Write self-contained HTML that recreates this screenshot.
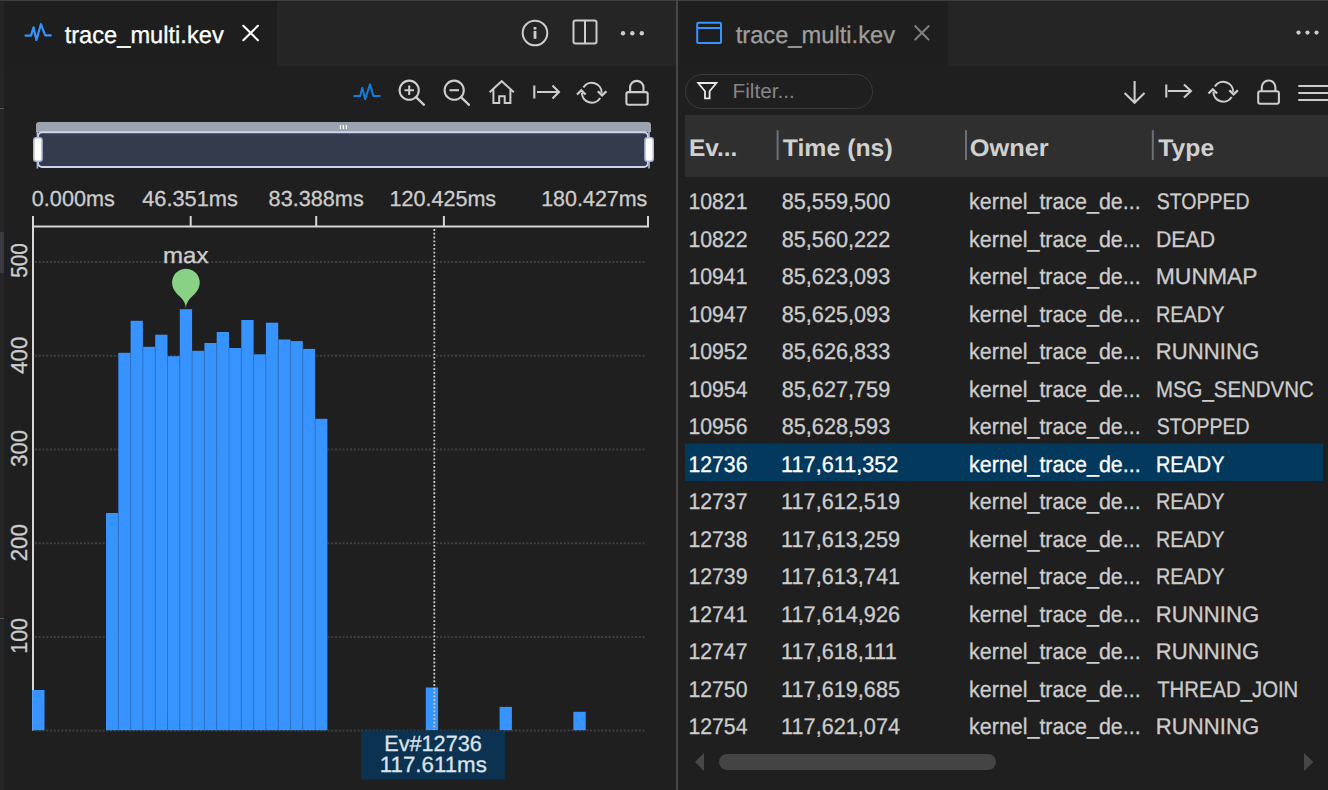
<!DOCTYPE html>
<html><head><meta charset="utf-8"><title>trace_multi.kev</title>
<style>
html,body{margin:0;padding:0;width:1328px;height:790px;overflow:hidden;background:#1f1f1f;}
svg{position:absolute;left:0;top:0;display:block;font-family:"Liberation Sans", sans-serif;text-rendering:geometricPrecision;}
</style></head><body>
<svg width="1328" height="790" viewBox="0 0 1328 790">
<rect x="0" y="0" width="1328" height="1" fill="#3f3f3f"/>
<rect x="0" y="1" width="4" height="789" fill="#252525"/>
<rect x="0" y="108" width="4" height="1" fill="#575757"/>
<rect x="0" y="232" width="4" height="41" fill="#393941"/>
<rect x="0" y="618" width="4" height="1" fill="#575757"/>
<rect x="4" y="1" width="672" height="65" fill="#252525"/>
<rect x="4" y="1" width="273" height="65" fill="#1e1e1e"/>
<rect x="676" y="0" width="2" height="790" fill="#474747"/>
<rect x="678" y="1" width="650" height="65" fill="#252525"/>
<rect x="678" y="1" width="270" height="65" fill="#1e1e1e"/>
<path d="M25.5 35.6 H31 L33.6 27.4 L36.4 40 L40.9 24.2 L45.2 35.4 H50.8" fill="none" stroke="#3794ff" stroke-width="2.2" stroke-linejoin="round" stroke-linecap="round"/>
<text transform="translate(64.65,42.60) scale(0.9856,1)" font-size="24" stroke="#ffffff" stroke-width="0.3" fill="#ffffff">trace_multi.kev</text>
<path d="M243.3 25.8 L257.9 40.2 M257.9 25.8 L243.3 40.2" stroke="#ffffff" stroke-width="2.1" stroke-linecap="round"/>
<circle cx="535" cy="33" r="12.3" fill="none" stroke="#cccccc" stroke-width="2"/>
<rect x="533.6" y="27" width="2.8" height="2.6" fill="#cccccc"/><rect x="533.6" y="31" width="2.8" height="7.8" fill="#cccccc"/>
<rect x="573.5" y="20.5" width="23" height="23" rx="2" fill="none" stroke="#cccccc" stroke-width="2"/><rect x="584" y="21" width="2" height="22" fill="#cccccc"/>
<circle cx="623" cy="33.2" r="2.2" fill="#cccccc"/>
<circle cx="632.3" cy="33.2" r="2.2" fill="#cccccc"/>
<circle cx="641.8" cy="33.2" r="2.2" fill="#cccccc"/>
<rect x="697.2" y="22.7" width="23.8" height="20.2" rx="1" fill="none" stroke="#3794ff" stroke-width="2"/><rect x="697" y="27" width="24" height="2" fill="#3794ff"/>
<text transform="translate(735.64,42.60) scale(0.9881,1)" font-size="24" stroke="#9d9d9d" stroke-width="0.3" fill="#9d9d9d">trace_multi.kev</text>
<path d="M915.3 26.2 L928.5 39.5 M928.5 26.2 L915.3 39.5" stroke="#7d7d7d" stroke-width="2.1" stroke-linecap="round"/>
<circle cx="1298.5" cy="32.6" r="2.1" fill="#cccccc"/>
<circle cx="1307.5" cy="32.6" r="2.1" fill="#cccccc"/>
<circle cx="1316.5" cy="32.6" r="2.1" fill="#cccccc"/>
<path d="M354 95.9 H360.2 L362.3 87.8 L365.2 99.2 L370 84.4 L373.4 95.9 H379.8" fill="none" stroke="#0f7dd9" stroke-width="2" stroke-linejoin="round" stroke-linecap="round"/>
<circle cx="409.2" cy="90.2" r="9.6" fill="none" stroke="#cccccc" stroke-width="2.1"/>
<path d="M416 97.2 L424 104.8" stroke="#cccccc" stroke-width="2.3" stroke-linecap="round"/>
<path d="M404.5 90.2 H414 M409.2 85.5 V95" stroke="#cccccc" stroke-width="2.1"/>
<circle cx="454.2" cy="90.2" r="9.6" fill="none" stroke="#cccccc" stroke-width="2.1"/>
<path d="M461 97.2 L469 104.8" stroke="#cccccc" stroke-width="2.3" stroke-linecap="round"/>
<path d="M449.5 90.2 H459" stroke="#cccccc" stroke-width="2.1"/>
<path d="M489.6 92.2 L501.7 81.2 L513.8 92.2 M493.4 89 V103 H499.2 V96.3 H504.7 V103 H510.4 V89" fill="none" stroke="#cccccc" stroke-width="2" stroke-linejoin="miter"/>
<path d="M534.3 85.5 V98.6 M537 92 H559 M552.5 85.6 L559 92 L552.5 98.5" fill="none" stroke="#cccccc" stroke-width="2.1"/>
<path d="M583.40 87.55 A9.9 9.9 0 0 1 601.70 92.80" fill="none" stroke="#cccccc" stroke-width="2.1"/><path d="M600.20 98.05 A9.9 9.9 0 0 1 581.90 92.80" fill="none" stroke="#cccccc" stroke-width="2.1"/><path d="M597.80 91.20 L602.10 95.40 L606.40 91.20" fill="none" stroke="#cccccc" stroke-width="2.3"/><path d="M577.00 94.50 L581.30 90.30 L585.60 94.50" fill="none" stroke="#cccccc" stroke-width="2.3"/>
<rect x="626.4" y="92.1" width="21.300000000000068" height="12.600000000000009" rx="2" fill="none" stroke="#cccccc" stroke-width="2.1"/><path d="M630.1 92.1 V87.6 A6.699999999999989 6.699999999999989 0 0 1 643.5 87.6 V92.1" fill="none" stroke="#cccccc" stroke-width="2.1"/>
<rect x="685.5" y="74.5" width="187" height="34" rx="17" fill="#1f1f1f" stroke="#3a3a3a" stroke-width="1"/>
<path d="M698.2 83 H716.4 L709.6 91.3 V98.3 H705 V91.3 Z" fill="none" stroke="#e8e8e8" stroke-width="1.8" stroke-linejoin="miter"/>
<text transform="translate(732.54,98.10) scale(1.0135,1)" font-size="20.5" fill="#858585">Filter...</text>
<path d="M1134.6 81 V102 M1124.6 93 L1134.6 102.8 L1144.5 93" fill="none" stroke="#cccccc" stroke-width="2.1"/>
<path d="M1166.3 84.4 V97.6 M1168 91 H1191 M1184 84.4 L1191 91 L1184 97.6" fill="none" stroke="#cccccc" stroke-width="2.1"/>
<path d="M1214.90 86.55 A9.9 9.9 0 0 1 1233.20 91.80" fill="none" stroke="#cccccc" stroke-width="2.1"/><path d="M1231.70 97.05 A9.9 9.9 0 0 1 1213.40 91.80" fill="none" stroke="#cccccc" stroke-width="2.1"/><path d="M1229.30 90.20 L1233.60 94.40 L1237.90 90.20" fill="none" stroke="#cccccc" stroke-width="2.3"/><path d="M1208.50 93.50 L1212.80 89.30 L1217.10 93.50" fill="none" stroke="#cccccc" stroke-width="2.3"/>
<rect x="1258.2" y="91.2" width="20.700000000000045" height="12.599999999999994" rx="2" fill="none" stroke="#cccccc" stroke-width="2.1"/><path d="M1261.8 91.2 V87.3 A6.800000000000068 6.800000000000068 0 0 1 1275.4 87.3 V91.2" fill="none" stroke="#cccccc" stroke-width="2.1"/>
<path d="M1298.3 86 H1328 M1298.3 93 H1328 M1298.3 100 H1328" stroke="#cccccc" stroke-width="2"/>
<path d="M36 132 V125 Q36 122 39 122 H648 Q651 122 651 125 V132 Z" fill="#9ca3b0"/>
<rect x="38" y="132.3" width="610" height="34.7" rx="4" fill="#343b4c" stroke="#c9d5ee" stroke-width="2"/>
<rect x="36.6" y="131" width="1.6" height="37.5" fill="#a9b8d9"/><rect x="648.2" y="131" width="1.6" height="37.5" fill="#a9b8d9"/>
<rect x="339.8" y="125" width="1.2" height="4" fill="#ffffff"/>
<rect x="342.8" y="125" width="1.2" height="4" fill="#ffffff"/>
<rect x="345.8" y="125" width="1.2" height="4" fill="#ffffff"/>
<rect x="33.8" y="137.8" width="8.2" height="23.4" rx="2.5" fill="#ffffff" stroke="#aebbd8" stroke-width="1.6"/>
<rect x="645" y="137.8" width="8.2" height="23.4" rx="2.5" fill="#ffffff" stroke="#aebbd8" stroke-width="1.6"/>
<text transform="translate(31.84,206.20) scale(0.9964,1)" font-size="21.7" stroke="#cccccc" stroke-width="0.3" fill="#cccccc">0.000ms</text>
<text transform="translate(142.16,206.20) scale(1.0046,1)" font-size="21.7" stroke="#cccccc" stroke-width="0.3" fill="#cccccc">46.351ms</text>
<text transform="translate(268.62,206.20) scale(0.9986,1)" font-size="21.7" stroke="#cccccc" stroke-width="0.3" fill="#cccccc">83.388ms</text>
<text transform="translate(389.38,206.20) scale(0.9950,1)" font-size="21.7" stroke="#cccccc" stroke-width="0.3" fill="#cccccc">120.425ms</text>
<text transform="translate(541.19,206.20) scale(0.9893,1)" font-size="21.7" stroke="#cccccc" stroke-width="0.3" fill="#cccccc">180.427ms</text>
<path d="M35 730.6 H646" stroke="#3f3f3f" stroke-width="2" stroke-dasharray="2 1.75"/>
<path d="M35 636.9 H646" stroke="#3f3f3f" stroke-width="2" stroke-dasharray="2 1.75"/>
<path d="M35 543.2 H646" stroke="#3f3f3f" stroke-width="2" stroke-dasharray="2 1.75"/>
<path d="M35 449.5 H646" stroke="#3f3f3f" stroke-width="2" stroke-dasharray="2 1.75"/>
<path d="M35 355.8 H646" stroke="#3f3f3f" stroke-width="2" stroke-dasharray="2 1.75"/>
<path d="M35 262.1 H646" stroke="#3f3f3f" stroke-width="2" stroke-dasharray="2 1.75"/>
<rect x="32" y="225.5" width="617" height="2" fill="#d6d6d6"/>
<rect x="32" y="216" width="2" height="514.5" fill="#d6d6d6"/>
<rect x="189.7" y="216" width="2" height="10" fill="#d6d6d6"/>
<rect x="315.2" y="216" width="2" height="10" fill="#d6d6d6"/>
<rect x="442.9" y="216" width="2" height="10" fill="#d6d6d6"/>
<rect x="647.0" y="216" width="2" height="10" fill="#d6d6d6"/>
<rect x="32.20" y="690.00" width="12.30" height="40.20" fill="#3794ff"/>
<rect x="106.00" y="513.00" width="12.30" height="217.20" fill="#3794ff"/>
<rect x="118.30" y="352.80" width="12.30" height="377.40" fill="#3794ff"/>
<rect x="130.60" y="320.80" width="12.30" height="409.40" fill="#3794ff"/>
<rect x="142.90" y="346.80" width="12.30" height="383.40" fill="#3794ff"/>
<rect x="155.20" y="334.70" width="12.30" height="395.50" fill="#3794ff"/>
<rect x="167.50" y="356.20" width="12.30" height="374.00" fill="#3794ff"/>
<rect x="179.80" y="309.20" width="12.30" height="421.00" fill="#3794ff"/>
<rect x="192.10" y="350.80" width="12.30" height="379.40" fill="#3794ff"/>
<rect x="204.40" y="343.00" width="12.30" height="387.20" fill="#3794ff"/>
<rect x="216.70" y="332.00" width="12.30" height="398.20" fill="#3794ff"/>
<rect x="229.00" y="348.00" width="12.30" height="382.20" fill="#3794ff"/>
<rect x="241.30" y="320.00" width="12.30" height="410.20" fill="#3794ff"/>
<rect x="253.60" y="354.30" width="12.30" height="375.90" fill="#3794ff"/>
<rect x="265.90" y="322.70" width="12.30" height="407.50" fill="#3794ff"/>
<rect x="278.20" y="339.50" width="12.30" height="390.70" fill="#3794ff"/>
<rect x="290.50" y="341.10" width="12.30" height="389.10" fill="#3794ff"/>
<rect x="302.80" y="348.90" width="12.30" height="381.30" fill="#3794ff"/>
<rect x="315.10" y="418.80" width="12.30" height="311.40" fill="#3794ff"/>
<rect x="425.80" y="687.50" width="12.30" height="42.70" fill="#3794ff"/>
<rect x="499.60" y="706.90" width="12.30" height="23.30" fill="#3794ff"/>
<rect x="573.40" y="711.80" width="12.30" height="18.40" fill="#3794ff"/>
<rect x="117.80" y="513.00" width="1" height="217.20" fill="#2f6fbf" opacity="0.8"/>
<rect x="130.10" y="352.80" width="1" height="377.40" fill="#2f6fbf" opacity="0.8"/>
<rect x="142.40" y="346.80" width="1" height="383.40" fill="#2f6fbf" opacity="0.8"/>
<rect x="154.70" y="346.80" width="1" height="383.40" fill="#2f6fbf" opacity="0.8"/>
<rect x="167.00" y="356.20" width="1" height="374.00" fill="#2f6fbf" opacity="0.8"/>
<rect x="179.30" y="356.20" width="1" height="374.00" fill="#2f6fbf" opacity="0.8"/>
<rect x="191.60" y="350.80" width="1" height="379.40" fill="#2f6fbf" opacity="0.8"/>
<rect x="203.90" y="350.80" width="1" height="379.40" fill="#2f6fbf" opacity="0.8"/>
<rect x="216.20" y="343.00" width="1" height="387.20" fill="#2f6fbf" opacity="0.8"/>
<rect x="228.50" y="348.00" width="1" height="382.20" fill="#2f6fbf" opacity="0.8"/>
<rect x="240.80" y="348.00" width="1" height="382.20" fill="#2f6fbf" opacity="0.8"/>
<rect x="253.10" y="354.30" width="1" height="375.90" fill="#2f6fbf" opacity="0.8"/>
<rect x="265.40" y="354.30" width="1" height="375.90" fill="#2f6fbf" opacity="0.8"/>
<rect x="277.70" y="339.50" width="1" height="390.70" fill="#2f6fbf" opacity="0.8"/>
<rect x="290.00" y="341.10" width="1" height="389.10" fill="#2f6fbf" opacity="0.8"/>
<rect x="302.30" y="348.90" width="1" height="381.30" fill="#2f6fbf" opacity="0.8"/>
<rect x="314.60" y="418.80" width="1" height="311.40" fill="#2f6fbf" opacity="0.8"/>
<text transform="translate(27.30,653.81) rotate(-90) scale(0.9339,1)" font-size="23" fill="#cccccc" stroke="#cccccc" stroke-width="0.3">100</text>
<text transform="translate(27.30,561.32) rotate(-90) scale(0.9714,1)" font-size="23" fill="#cccccc" stroke="#cccccc" stroke-width="0.3">200</text>
<text transform="translate(27.30,466.78) rotate(-90) scale(0.9543,1)" font-size="23" fill="#cccccc" stroke="#cccccc" stroke-width="0.3">300</text>
<text transform="translate(27.30,373.64) rotate(-90) scale(0.9587,1)" font-size="23" fill="#cccccc" stroke="#cccccc" stroke-width="0.3">400</text>
<text transform="translate(27.30,277.83) rotate(-90) scale(0.9024,1)" font-size="23" fill="#cccccc" stroke="#cccccc" stroke-width="0.3">500</text>
<path d="M434.3 229.1 V730" stroke="#c8c8c8" stroke-width="1.8" stroke-dasharray="1.9 1.86"/>
<path d="M173.39 288.65 A13.9 13.9 0 1 1 198.41 288.65 C194.78 296.16 185.9 298.77 185.9 308.6 C185.9 298.77 177.02 296.16 173.39 288.65 Z" fill="#89d185"/>
<text transform="translate(163.04,262.90) scale(1.0676,1)" font-size="22.5" stroke="#cccccc" stroke-width="0.3" fill="#cccccc">max</text>
<rect x="361" y="730.4" width="144" height="49.4" rx="2" fill="#0b3251"/>
<text transform="translate(384.27,750.90) scale(0.9837,1)" font-size="22" stroke="#dde3ea" stroke-width="0.3" fill="#dde3ea">Ev#12736</text>
<text transform="translate(379.83,771.70) scale(1.0128,1)" font-size="22" stroke="#dde3ea" stroke-width="0.3" fill="#dde3ea">117.611ms</text>
<rect x="685" y="115" width="643" height="62" fill="#2f2f2f"/>
<text transform="translate(688.91,156.20) scale(1.0180,1)" font-size="24" font-weight="bold" fill="#d0d0d0">Ev...</text>
<text transform="translate(782.75,156.20) scale(1.0345,1)" font-size="24" font-weight="bold" fill="#d0d0d0">Time (ns)</text>
<text transform="translate(969.79,156.20) scale(1.0566,1)" font-size="24" font-weight="bold" fill="#d0d0d0">Owner</text>
<text transform="translate(1158.25,156.20) scale(1.0309,1)" font-size="24" font-weight="bold" fill="#d0d0d0">Type</text>
<rect x="776.6" y="130.2" width="2" height="29.8" fill="#6a7076"/>
<rect x="965.0" y="130.2" width="2" height="29.8" fill="#6a7076"/>
<rect x="1151.8" y="130.2" width="2" height="29.8" fill="#6a7076"/>
<text transform="translate(688.41,209.20) scale(0.9357,1)" font-size="22.7" stroke="#cccccc" stroke-width="0.3" fill="#cccccc">10821</text>
<text transform="translate(781.72,209.20) scale(0.9554,1)" font-size="22.7" stroke="#cccccc" stroke-width="0.3" fill="#cccccc">85,559,500</text>
<text transform="translate(969.11,209.20) scale(0.9445,1)" font-size="22.7" stroke="#cccccc" stroke-width="0.3" fill="#cccccc">kernel_trace_de...</text>
<text transform="translate(1156.72,209.20) scale(0.8594,1)" font-size="22.7" stroke="#cccccc" stroke-width="0.3" fill="#cccccc">STOPPED</text>
<text transform="translate(688.41,246.70) scale(0.9357,1)" font-size="22.7" stroke="#cccccc" stroke-width="0.3" fill="#cccccc">10822</text>
<text transform="translate(781.72,246.70) scale(0.9554,1)" font-size="22.7" stroke="#cccccc" stroke-width="0.3" fill="#cccccc">85,560,222</text>
<text transform="translate(969.11,246.70) scale(0.9445,1)" font-size="22.7" stroke="#cccccc" stroke-width="0.3" fill="#cccccc">kernel_trace_de...</text>
<text transform="translate(1155.90,246.70) scale(0.9376,1)" font-size="22.7" stroke="#cccccc" stroke-width="0.3" fill="#cccccc">DEAD</text>
<text transform="translate(688.41,284.20) scale(0.9357,1)" font-size="22.7" stroke="#cccccc" stroke-width="0.3" fill="#cccccc">10941</text>
<text transform="translate(781.72,284.20) scale(0.9554,1)" font-size="22.7" stroke="#cccccc" stroke-width="0.3" fill="#cccccc">85,623,093</text>
<text transform="translate(969.11,284.20) scale(0.9445,1)" font-size="22.7" stroke="#cccccc" stroke-width="0.3" fill="#cccccc">kernel_trace_de...</text>
<text transform="translate(1155.77,284.20) scale(1.0097,1)" font-size="22.7" stroke="#cccccc" stroke-width="0.3" fill="#cccccc">MUNMAP</text>
<text transform="translate(688.41,321.70) scale(0.9357,1)" font-size="22.7" stroke="#cccccc" stroke-width="0.3" fill="#cccccc">10947</text>
<text transform="translate(781.72,321.70) scale(0.9554,1)" font-size="22.7" stroke="#cccccc" stroke-width="0.3" fill="#cccccc">85,625,093</text>
<text transform="translate(969.11,321.70) scale(0.9445,1)" font-size="22.7" stroke="#cccccc" stroke-width="0.3" fill="#cccccc">kernel_trace_de...</text>
<text transform="translate(1156.01,321.70) scale(0.8745,1)" font-size="22.7" stroke="#cccccc" stroke-width="0.3" fill="#cccccc">READY</text>
<text transform="translate(688.41,359.20) scale(0.9357,1)" font-size="22.7" stroke="#cccccc" stroke-width="0.3" fill="#cccccc">10952</text>
<text transform="translate(781.72,359.20) scale(0.9554,1)" font-size="22.7" stroke="#cccccc" stroke-width="0.3" fill="#cccccc">85,626,833</text>
<text transform="translate(969.11,359.20) scale(0.9445,1)" font-size="22.7" stroke="#cccccc" stroke-width="0.3" fill="#cccccc">kernel_trace_de...</text>
<text transform="translate(1155.83,359.20) scale(0.9757,1)" font-size="22.7" stroke="#cccccc" stroke-width="0.3" fill="#cccccc">RUNNING</text>
<text transform="translate(688.41,396.70) scale(0.9357,1)" font-size="22.7" stroke="#cccccc" stroke-width="0.3" fill="#cccccc">10954</text>
<text transform="translate(781.72,396.70) scale(0.9554,1)" font-size="22.7" stroke="#cccccc" stroke-width="0.3" fill="#cccccc">85,627,759</text>
<text transform="translate(969.11,396.70) scale(0.9445,1)" font-size="22.7" stroke="#cccccc" stroke-width="0.3" fill="#cccccc">kernel_trace_de...</text>
<text transform="translate(1155.97,396.70) scale(0.9002,1)" font-size="22.7" stroke="#cccccc" stroke-width="0.3" fill="#cccccc">MSG_SENDVNC</text>
<text transform="translate(688.41,434.20) scale(0.9357,1)" font-size="22.7" stroke="#cccccc" stroke-width="0.3" fill="#cccccc">10956</text>
<text transform="translate(781.72,434.20) scale(0.9554,1)" font-size="22.7" stroke="#cccccc" stroke-width="0.3" fill="#cccccc">85,628,593</text>
<text transform="translate(969.11,434.20) scale(0.9445,1)" font-size="22.7" stroke="#cccccc" stroke-width="0.3" fill="#cccccc">kernel_trace_de...</text>
<text transform="translate(1156.72,434.20) scale(0.8594,1)" font-size="22.7" stroke="#cccccc" stroke-width="0.3" fill="#cccccc">STOPPED</text>
<rect x="685" y="443.5" width="638" height="37.5" fill="#04395e"/>
<text transform="translate(688.41,471.70) scale(0.9357,1)" font-size="22.7" stroke="#ffffff" stroke-width="0.3" fill="#ffffff">12736</text>
<text transform="translate(781.07,471.70) scale(0.9554,1)" font-size="22.7" stroke="#ffffff" stroke-width="0.3" fill="#ffffff">117,611,352</text>
<text transform="translate(969.11,471.70) scale(0.9445,1)" font-size="22.7" stroke="#ffffff" stroke-width="0.3" fill="#ffffff">kernel_trace_de...</text>
<text transform="translate(1156.01,471.70) scale(0.8745,1)" font-size="22.7" stroke="#ffffff" stroke-width="0.3" fill="#ffffff">READY</text>
<text transform="translate(688.41,509.20) scale(0.9357,1)" font-size="22.7" stroke="#cccccc" stroke-width="0.3" fill="#cccccc">12737</text>
<text transform="translate(781.07,509.20) scale(0.9554,1)" font-size="22.7" stroke="#cccccc" stroke-width="0.3" fill="#cccccc">117,612,519</text>
<text transform="translate(969.11,509.20) scale(0.9445,1)" font-size="22.7" stroke="#cccccc" stroke-width="0.3" fill="#cccccc">kernel_trace_de...</text>
<text transform="translate(1156.01,509.20) scale(0.8745,1)" font-size="22.7" stroke="#cccccc" stroke-width="0.3" fill="#cccccc">READY</text>
<text transform="translate(688.41,546.70) scale(0.9357,1)" font-size="22.7" stroke="#cccccc" stroke-width="0.3" fill="#cccccc">12738</text>
<text transform="translate(781.07,546.70) scale(0.9554,1)" font-size="22.7" stroke="#cccccc" stroke-width="0.3" fill="#cccccc">117,613,259</text>
<text transform="translate(969.11,546.70) scale(0.9445,1)" font-size="22.7" stroke="#cccccc" stroke-width="0.3" fill="#cccccc">kernel_trace_de...</text>
<text transform="translate(1156.01,546.70) scale(0.8745,1)" font-size="22.7" stroke="#cccccc" stroke-width="0.3" fill="#cccccc">READY</text>
<text transform="translate(688.41,584.20) scale(0.9357,1)" font-size="22.7" stroke="#cccccc" stroke-width="0.3" fill="#cccccc">12739</text>
<text transform="translate(781.07,584.20) scale(0.9554,1)" font-size="22.7" stroke="#cccccc" stroke-width="0.3" fill="#cccccc">117,613,741</text>
<text transform="translate(969.11,584.20) scale(0.9445,1)" font-size="22.7" stroke="#cccccc" stroke-width="0.3" fill="#cccccc">kernel_trace_de...</text>
<text transform="translate(1156.01,584.20) scale(0.8745,1)" font-size="22.7" stroke="#cccccc" stroke-width="0.3" fill="#cccccc">READY</text>
<text transform="translate(688.41,621.70) scale(0.9357,1)" font-size="22.7" stroke="#cccccc" stroke-width="0.3" fill="#cccccc">12741</text>
<text transform="translate(781.07,621.70) scale(0.9554,1)" font-size="22.7" stroke="#cccccc" stroke-width="0.3" fill="#cccccc">117,614,926</text>
<text transform="translate(969.11,621.70) scale(0.9445,1)" font-size="22.7" stroke="#cccccc" stroke-width="0.3" fill="#cccccc">kernel_trace_de...</text>
<text transform="translate(1155.83,621.70) scale(0.9757,1)" font-size="22.7" stroke="#cccccc" stroke-width="0.3" fill="#cccccc">RUNNING</text>
<text transform="translate(688.41,659.20) scale(0.9357,1)" font-size="22.7" stroke="#cccccc" stroke-width="0.3" fill="#cccccc">12747</text>
<text transform="translate(781.07,659.20) scale(0.9554,1)" font-size="22.7" stroke="#cccccc" stroke-width="0.3" fill="#cccccc">117,618,111</text>
<text transform="translate(969.11,659.20) scale(0.9445,1)" font-size="22.7" stroke="#cccccc" stroke-width="0.3" fill="#cccccc">kernel_trace_de...</text>
<text transform="translate(1155.83,659.20) scale(0.9757,1)" font-size="22.7" stroke="#cccccc" stroke-width="0.3" fill="#cccccc">RUNNING</text>
<text transform="translate(688.41,696.70) scale(0.9357,1)" font-size="22.7" stroke="#cccccc" stroke-width="0.3" fill="#cccccc">12750</text>
<text transform="translate(781.07,696.70) scale(0.9554,1)" font-size="22.7" stroke="#cccccc" stroke-width="0.3" fill="#cccccc">117,619,685</text>
<text transform="translate(969.11,696.70) scale(0.9445,1)" font-size="22.7" stroke="#cccccc" stroke-width="0.3" fill="#cccccc">kernel_trace_de...</text>
<text transform="translate(1157.19,696.70) scale(0.8952,1)" font-size="22.7" stroke="#cccccc" stroke-width="0.3" fill="#cccccc">THREAD_JOIN</text>
<text transform="translate(688.41,734.20) scale(0.9357,1)" font-size="22.7" stroke="#cccccc" stroke-width="0.3" fill="#cccccc">12754</text>
<text transform="translate(781.07,734.20) scale(0.9554,1)" font-size="22.7" stroke="#cccccc" stroke-width="0.3" fill="#cccccc">117,621,074</text>
<text transform="translate(969.11,734.20) scale(0.9445,1)" font-size="22.7" stroke="#cccccc" stroke-width="0.3" fill="#cccccc">kernel_trace_de...</text>
<text transform="translate(1155.83,734.20) scale(0.9757,1)" font-size="22.7" stroke="#cccccc" stroke-width="0.3" fill="#cccccc">RUNNING</text>
<rect x="719" y="754" width="277" height="16" rx="8" fill="#444444"/>
<path d="M704 753 V771 L695 762 Z" fill="#474747"/>
<path d="M1304 753 V771 L1313.3 762 Z" fill="#474747"/>
</svg>
</body></html>
